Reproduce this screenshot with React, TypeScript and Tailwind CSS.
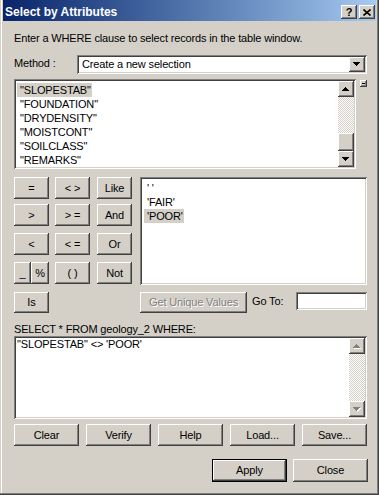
import React from "react";

const raised = "shadow-[inset_-1px_-1px_#404040,inset_1px_1px_#fff,inset_-2px_-2px_#808080]";
const sunken = "shadow-[inset_1px_1px_#808080,inset_-1px_-1px_#fff,inset_2px_2px_#404040,inset_-2px_-2px_#d4d0c8]";
const track = "bg-[image:repeating-conic-gradient(#d4d0c8_0_25%,#fff_0_50%)] bg-[length:2px_2px]";

const fields = ['"SLOPESTAB"', '"FOUNDATION"', '"DRYDENSITY"', '"MOISTCONT"', '"SOILCLASS"', '"REMARKS"'];
const values = ["' '", "'FAIR'", "'POOR'"];

function Arrow({ up = false, disabled = false }: { up?: boolean; disabled?: boolean }) {
  const rows: [number, number][] = [
    [3, 1],
    [2, 3],
    [1, 5],
    [0, 7]
  ];
  const list = up ? rows : [...rows].reverse();
  return (
    <svg width="8" height="5" viewBox="0 0 8 5">
      {disabled
        ? list.map(([x, w], i) => <rect key={`s${i}`} x={x + 1} y={i + 1} width={w} height={1} fill="#fff" />)
        : null}
      {list.map(([x, w], i) => (
        <rect key={i} x={x} y={i} width={w} height={1} fill={disabled ? "#808080" : "#000"} />
      ))}
    </svg>
  );
}

function ScrollBtn({ up = false, disabled = false }: { up?: boolean; disabled?: boolean }) {
  return (
    <div className={`flex h-[16px] w-[16px] shrink-0 items-center justify-center bg-[#d4d0c8] ${raised}`}>
      <Arrow up={up} disabled={disabled} />
    </div>
  );
}

function ScrollBar({ thumb = false, disabled = false }: { thumb?: boolean; disabled?: boolean }) {
  return (
    <div className="flex h-full w-[16px] shrink-0 flex-col">
      <ScrollBtn up disabled={disabled} />
      <div className={`flex flex-1 flex-col justify-end ${track}`}>
        {thumb ? <div className={`h-[18px] w-[16px] bg-[#d4d0c8] ${raised}`} /> : null}
      </div>
      <ScrollBtn disabled={disabled} />
    </div>
  );
}

function Btn({ label, className = "", disabled = false }: { label: string; className?: string; disabled?: boolean }) {
  return (
    <button
      type="button"
      className={`flex shrink-0 items-center justify-center bg-[#d4d0c8] leading-[13px] ${raised} ${
        disabled ? "text-[#808080] [text-shadow:1px_1px_0_#fff]" : "text-black"
      } ${className}`}
    >
      {label}
    </button>
  );
}

export default function App() {
  return (
    <div className="relative h-[495px] w-[379px] overflow-hidden bg-[#d4d0c8] font-['Liberation_Sans',Arial,sans-serif] text-[11px] tracking-[-0.15px] text-black shadow-[inset_-1px_-1px_#404040,inset_-2px_-2px_#808080,inset_1px_0_#d4d0c8,inset_2px_0_#fff]">
      <div className="ml-[3px] mr-[3px] flex h-[21px] items-start justify-between bg-linear-to-r from-[#0a246a] to-[#a6caf0]">
        <span className="mt-[5px] pl-[2px] text-[12px] font-bold leading-[14px] tracking-normal text-white">
          Select by Attributes
        </span>
        <div className="mt-[5px] flex gap-[2px] pr-[1px]">
          <div className={`flex h-[14px] w-[16px] items-center justify-center bg-[#d4d0c8] text-[11px] font-bold leading-[11px] ${raised}`}>
            ?
          </div>
          <div className={`flex h-[14px] w-[16px] items-center justify-center bg-[#d4d0c8] ${raised}`}>
            <svg width="8" height="7" viewBox="0 0 8 7">
              <path d="M0.5 0.5 L7.5 6.5 M7.5 0.5 L0.5 6.5" stroke="#000" strokeWidth="1.6" />
            </svg>
          </div>
        </div>
      </div>

      <div className="pl-[14px] pr-[12px]">
        <p className="mt-[11px] leading-[13px]">Enter a WHERE clause to select records in the table window.</p>

        <div className="mt-[10px] flex items-start">
          <span className="mt-[2px] w-[63px] leading-[13px]">Method :</span>
          <div className={`flex h-[19px] w-[290px] bg-white p-[2px] ${sunken}`}>
            <span className="flex-1 pl-[3px] pt-[1px] leading-[13px]">Create a new selection</span>
            <div className={`flex h-full w-[16px] items-center justify-center bg-[#d4d0c8] ${raised}`}>
              <Arrow />
            </div>
          </div>
        </div>

        <div className="mt-[5px] flex items-start">
          <div className={`flex h-[90px] w-[343px] bg-white p-[2px] ${sunken}`}>
            <div className="flex-1 pl-[1px] pt-[2px]">
              {fields.map((f, i) => (
                <div key={f} className="h-[14px] leading-[14px]">
                  <span className={`inline-block pl-[3px] pr-[1px] ${i === 0 ? "bg-[#d4d0c8]" : ""}`}>{f}</span>
                </div>
              ))}
            </div>
            <ScrollBar thumb />
          </div>
          <div className={`ml-[4px] mt-[1px] flex h-[7px] w-[7px] items-center justify-center bg-[#d4d0c8] ${raised}`}>
            <div className="mb-[1px] h-[1px] w-[3px] bg-black" />
          </div>
        </div>

        <div className="mt-[8px] flex items-start">
          <div className="w-[118px]">
            <div className="flex h-[22px]">
              <Btn label="=" className="w-[35px]" />
              <Btn label="< >" className="ml-[6px] w-[35px]" />
              <Btn label="Like" className="ml-[7px] w-[35px]" />
            </div>
            <div className="mt-[5px] flex h-[22px]">
              <Btn label=">" className="w-[35px]" />
              <Btn label="> =" className="ml-[6px] w-[35px]" />
              <Btn label="And" className="ml-[7px] w-[35px]" />
            </div>
            <div className="mt-[7px] flex h-[22px]">
              <Btn label="<" className="w-[35px]" />
              <Btn label="< =" className="ml-[6px] w-[35px]" />
              <Btn label="Or" className="ml-[7px] w-[35px]" />
            </div>
            <div className="mt-[7px] flex h-[22px]">
              <Btn label="_" className="w-[17px]" />
              <Btn label="%" className="w-[18px]" />
              <Btn label="( )" className="ml-[6px] w-[35px]" />
              <Btn label="Not" className="ml-[7px] w-[35px]" />
            </div>
          </div>
          <div className={`ml-[8px] h-[108px] w-[227px] bg-white p-[2px] ${sunken}`}>
            <div className="pl-[2px] pt-[2px]">
              {values.map((v, i) => (
                <div key={v} className="h-[14px] leading-[14px]">
                  <span className={`inline-block pl-[3px] pr-[1px] ${i === 2 ? "bg-[#d4d0c8]" : ""}`}>{v}</span>
                </div>
              ))}
            </div>
          </div>
        </div>

        <div className="mt-[7px] flex items-start">
          <Btn label="Is" className="h-[21px] w-[35px]" />
          <Btn label="Get Unique Values" disabled className="ml-[91px] h-[21px] w-[107px]" />
          <span className="ml-[5px] mt-[3px] leading-[13px]">Go To:</span>
          <div className={`ml-auto h-[18px] w-[71px] bg-white ${sunken}`} />
        </div>

        <p className="mt-[10px] leading-[13px]">SELECT * FROM geology_2 WHERE:</p>
        <div className={`flex h-[83px] w-[353px] bg-white p-[2px] ${sunken}`}>
          <div className="flex-1 pl-[1px] leading-[13px]">"SLOPESTAB" &lt;&gt; 'POOR'</div>
          <ScrollBar disabled />
        </div>

        <div className="mt-[5px] flex h-[22px] gap-[7px]">
          <Btn label="Clear" className="w-[65px]" />
          <Btn label="Verify" className="w-[65px]" />
          <Btn label="Help" className="w-[65px]" />
          <Btn label="Load..." className="w-[65px]" />
          <Btn label="Save..." className="w-[65px]" />
        </div>

        <div className="mt-[13px] flex h-[23px] gap-[6px] pl-[198px]">
          <Btn label="Apply" className="w-[75px] border border-black" />
          <Btn label="Close" className="w-[75px]" />
        </div>
      </div>
    </div>
  );
}
